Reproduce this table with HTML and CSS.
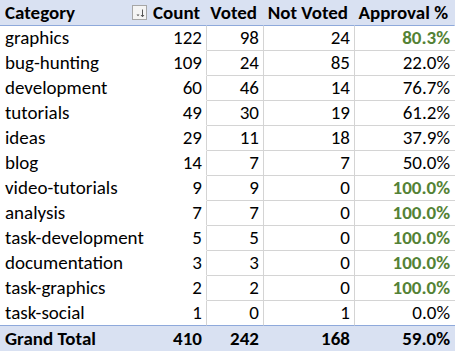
FILE: index.html
```html
<!DOCTYPE html>
<html>
<head>
<meta charset="utf-8">
<link rel="stylesheet" href="styles.css">
</head>
<body>
<table class="pivot">
  <colgroup>
    <col class="c-cat"><col class="c-count"><col class="c-voted"><col class="c-not"><col class="c-appr">
  </colgroup>
  <thead>
    <tr class="head">
      <th class="cat"><div class="cat-head"><span>Category</span><span class="filter"><svg width="12" height="12" viewBox="0 0 12 12"><path d="M2.5 7.5h3l-1.5 1.8z" fill="#555"/><path d="M8.5 2.5v7M7 8l1.5 1.8L10 8" fill="none" stroke="#555" stroke-width="1"/></svg></span></div></th>
      <th>Count</th>
      <th>Voted</th>
      <th>Not Voted</th>
      <th>Approval %</th>
    </tr>
  </thead>
  <tbody>
    <tr><td class="cat">graphics</td><td class="cnt">122</td><td class="g">98</td><td class="g">24</td><td class="g last good">80.3%</td></tr>
    <tr><td class="cat">bug-hunting</td><td class="cnt">109</td><td class="g">24</td><td class="g">85</td><td class="g last">22.0%</td></tr>
    <tr><td class="cat">development</td><td class="cnt">60</td><td class="g">46</td><td class="g">14</td><td class="g last">76.7%</td></tr>
    <tr><td class="cat">tutorials</td><td class="cnt">49</td><td class="g">30</td><td class="g">19</td><td class="g last">61.2%</td></tr>
    <tr><td class="cat">ideas</td><td class="cnt">29</td><td class="g">11</td><td class="g">18</td><td class="g last">37.9%</td></tr>
    <tr><td class="cat">blog</td><td class="cnt">14</td><td class="g">7</td><td class="g">7</td><td class="g last">50.0%</td></tr>
    <tr><td class="cat">video-tutorials</td><td class="cnt">9</td><td class="g">9</td><td class="g">0</td><td class="g last good">100.0%</td></tr>
    <tr><td class="cat">analysis</td><td class="cnt">7</td><td class="g">7</td><td class="g">0</td><td class="g last good">100.0%</td></tr>
    <tr><td class="cat">task-development</td><td class="cnt">5</td><td class="g">5</td><td class="g">0</td><td class="g last good">100.0%</td></tr>
    <tr><td class="cat">documentation</td><td class="cnt">3</td><td class="g">3</td><td class="g">0</td><td class="g last good">100.0%</td></tr>
    <tr><td class="cat">task-graphics</td><td class="cnt">2</td><td class="g">2</td><td class="g">0</td><td class="g last good">100.0%</td></tr>
    <tr class="final"><td class="cat">task-social</td><td class="cnt">1</td><td class="g">0</td><td class="g">1</td><td class="g last">0.0%</td></tr>
  </tbody>
  <tfoot>
    <tr class="total">
      <td class="cat">Grand Total</td><td>410</td><td>242</td><td>168</td><td>59.0%</td>
    </tr>
  </tfoot>
</table>
</body>
</html>
```

FILE: styles.css
```css
html, body {
  margin: 0;
  padding: 0;
  background: #ffffff;
  overflow: hidden;
}

.pivot {
  border-collapse: separate;
  border-spacing: 0;
  table-layout: fixed;
  width: 455px;
  font-family: Carlito, Calibri, Lato, "Open Sans", sans-serif;
  font-size: 19px;
  color: #000;
}

.c-cat { width: 149px; }
.c-count { width: 58px; }
.c-voted { width: 57px; }
.c-not { width: 91px; }
.c-appr { width: 100px; }

.pivot th,
.pivot td {
  padding: 0 4px 0 0;
  text-align: right;
  white-space: nowrap;
  line-height: 24px;
  height: 24px;
  border-right: 1px solid transparent;
  border-bottom: 1px solid transparent;
  vertical-align: middle;
  overflow: hidden;
}

.pivot th.cat,
.pivot td.cat {
  text-align: left;
  padding-left: 5px;
  border-right: none;
}

.head th {
  background: #d9e1f2;
  font-weight: bold;
  height: 25px;
  line-height: 25px;
  border-bottom: 1px solid #8ea9db;
  padding-right: 6px;
}

.head th.cat {
  padding-right: 2px;
}

.cat-head {
  display: flex;
  align-items: center;
  justify-content: space-between;
}

.filter {
  width: 13px;
  height: 13px;
  border: 1px solid #a6a6a6;
  background: #f4f4f4;
  display: flex;
  align-items: center;
  justify-content: center;
}

.filter svg { display: block; }

tbody td.cnt {
  border-right: 1px solid #d4d4d4;
}

tbody td.g {
  border-right: 1px solid #d4d4d4;
  border-bottom: 1px solid #d4d4d4;
}

tbody td.last {
  border-right: none;
  padding-right: 5px;
}

tbody tr.final td {
  border-bottom: 1px solid #8ea9db;
}

td.good {
  color: #548235;
  font-weight: bold;
}

.total td {
  background: #d9e1f2;
  font-weight: bold;
  height: 25px;
  line-height: 25px;
  border-bottom: none;
}

.total td:last-child {
  padding-right: 5px;
  border-right: none;
}
```
